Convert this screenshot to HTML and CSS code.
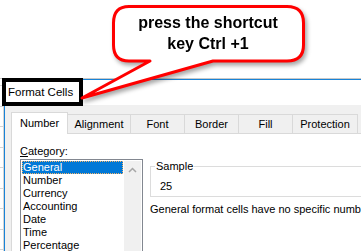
FILE: index.html
```html
<!DOCTYPE html>
<html lang="en">

<head>
    <meta charset="UTF-8">
    <meta name="viewport" content="width=device-width, initial-scale=1.0">
    <title>Format Cells</title>
    <link rel="stylesheet" href="styles.css">
</head>

<body>
    <div class="sheet"></div>
    <div class="main">
        <div class="gutter"></div>
        <div class="dialog">
            <div class="titlebar">Format Cells</div>
            <div class="dialog-body">
                <div class="tabs">
                    <div class="tab active tab-number">Number</div>
                    <div class="tab tab-alignment">Alignment</div>
                    <div class="tab tab-font">Font</div>
                    <div class="tab tab-border">Border</div>
                    <div class="tab tab-fill">Fill</div>
                    <div class="tab tab-protection">Protection</div>
                </div>
                <div class="panel">
                    <div class="category">
                        <div class="label"><u>C</u>ategory:</div>
                        <div class="listbox">
                            <div class="rows">
                                <div class="item selected">General</div>
                                <div class="item">Number</div>
                                <div class="item">Currency</div>
                                <div class="item">Accounting</div>
                                <div class="item">Date</div>
                                <div class="item">Time</div>
                                <div class="item">Percentage</div>
                            </div>
                            <div class="scroll">
                                <svg width="9" height="6" viewBox="0 0 9 6">
                                    <polyline points="1,5 4.5,1.5 8,5" fill="none" stroke="#a6a6a6" stroke-width="1.5"/>
                                </svg>
                            </div>
                        </div>
                    </div>
                    <div class="sample-col">
                        <fieldset class="sample">
                            <legend>Sample</legend>
                            <div class="sample-value">25</div>
                        </fieldset>
                        <div class="desc">General format cells have no specific number formatting.</div>
                    </div>
                </div>
            </div>
        </div>
    </div>

    <div class="title-mark"></div>

    <svg class="callout" width="361" height="251" viewBox="0 0 361 251">
        <path d="M 129 6.5 H 287 Q 303.5 6.5 303.5 23 V 45 Q 303.5 61 287 61 H 213 L 82 98 L 150 61 H 129 Q 113.5 61 113.5 45 V 23 Q 113.5 6.5 129 6.5 Z"
            fill="#fff" stroke="#ff0000" stroke-width="3" stroke-linejoin="round"/>
        <text x="208" y="28" class="callout-text">press the shortcut</text>
        <text x="208" y="49" class="callout-text">key Ctrl +1</text>
    </svg>
</body>

</html>
```

FILE: styles.css
```css
body {
    margin: 0;
    width: 361px;
    height: 251px;
    overflow: hidden;
    position: relative;
    background: #fff;
    font-family: "Liberation Sans", Arial, sans-serif;
    font-size: 11px;
    color: #000;
}

.sheet {
    height: 78px;
    border-bottom: 1px solid #c8c8c8;
}

.main {
    display: flex;
    height: 172px;
}

.gutter {
    width: 3px;
    border-right: 1px solid #d4d4d4;
    background: repeating-linear-gradient(to bottom, #fff 0 6px, #d4d4d4 6px 7px, #fff 7px 20.5px);
}

.dialog {
    flex: 1;
    min-width: 0;
    border-left: 1px solid #1883d7;
    border-top: 1px solid #1883d7;
}

.titlebar {
    height: 25px;
    line-height: 25px;
    padding-left: 3px;
    font-size: 11.5px;
    background: #fff;
}

.dialog-body {
    background: #f0f0f0;
    padding: 7px 0 0 6px;
    height: 200px;
}

.tabs {
    display: flex;
    align-items: flex-end;
    height: 21px;
}

.tab {
    box-sizing: border-box;
    height: 19px;
    line-height: 18px;
    text-align: center;
    border: 1px solid #d9d9d9;
    border-bottom: none;
    margin-left: -1px;
    background: #f0f0f0;
    flex-shrink: 0;
}

.tab.active {
    height: 22px;
    line-height: 21px;
    margin-left: 0;
    margin-bottom: -1px;
    background: #fff;
    position: relative;
    z-index: 1;
}

.tab-number { width: 57px; }
.tab-alignment { width: 64px; }
.tab-font { width: 55px; }
.tab-border { width: 55px; }
.tab-fill { width: 55px; }
.tab-protection { width: 66px; }

.panel {
    box-sizing: border-box;
    width: 400px;
    height: 130px;
    background: #fff;
    border: 1px solid #d9d9d9;
    padding: 10px 0 0 8px;
    display: flex;
}

.label {
    line-height: 14px;
}

.listbox {
    box-sizing: border-box;
    width: 123px;
    height: 100px;
    margin-top: 1px;
    border: 1px solid #828790;
    padding: 1px;
    display: flex;
}

.rows {
    width: 101px;
}

.item {
    height: 13px;
    line-height: 13px;
    padding-left: 1px;
}

.item.selected {
    background: #0078d7;
    color: #fff;
    outline: 1px dotted #f3b56b;
    outline-offset: -1px;
}

.scroll {
    width: 17px;
    margin-left: 1px;
    background: #f0f0f0;
    display: flex;
    justify-content: center;
    align-items: flex-start;
    padding-top: 6px;
    box-sizing: border-box;
}

.scroll svg {
    display: block;
}

.sample-col {
    margin: 15px 0 0 7px;
}

.sample {
    margin: 0;
    width: 260px;
    border: 1px solid #dcdcdc;
    padding: 0 0 3px 4px;
}

.sample legend {
    padding: 0 1px;
    line-height: 14px;
}

.sample-value {
    margin-top: 6px;
    padding-left: 5px;
    line-height: 14px;
}

.desc {
    margin-top: 5px;
    line-height: 14px;
    white-space: nowrap;
}

.title-mark {
    position: absolute;
    left: 2px;
    top: 78px;
    width: 81px;
    height: 28px;
    box-sizing: border-box;
    border: 4px solid #000;
}

.callout {
    position: absolute;
    left: 0;
    top: 0;
    overflow: visible;
    pointer-events: none;
    filter: drop-shadow(2px 3px 2px rgba(0, 0, 0, 0.35));
}

.callout-text {
    font-family: "Liberation Sans", Arial, sans-serif;
    font-weight: bold;
    font-size: 16px;
    text-anchor: middle;
    fill: #000;
}
```
